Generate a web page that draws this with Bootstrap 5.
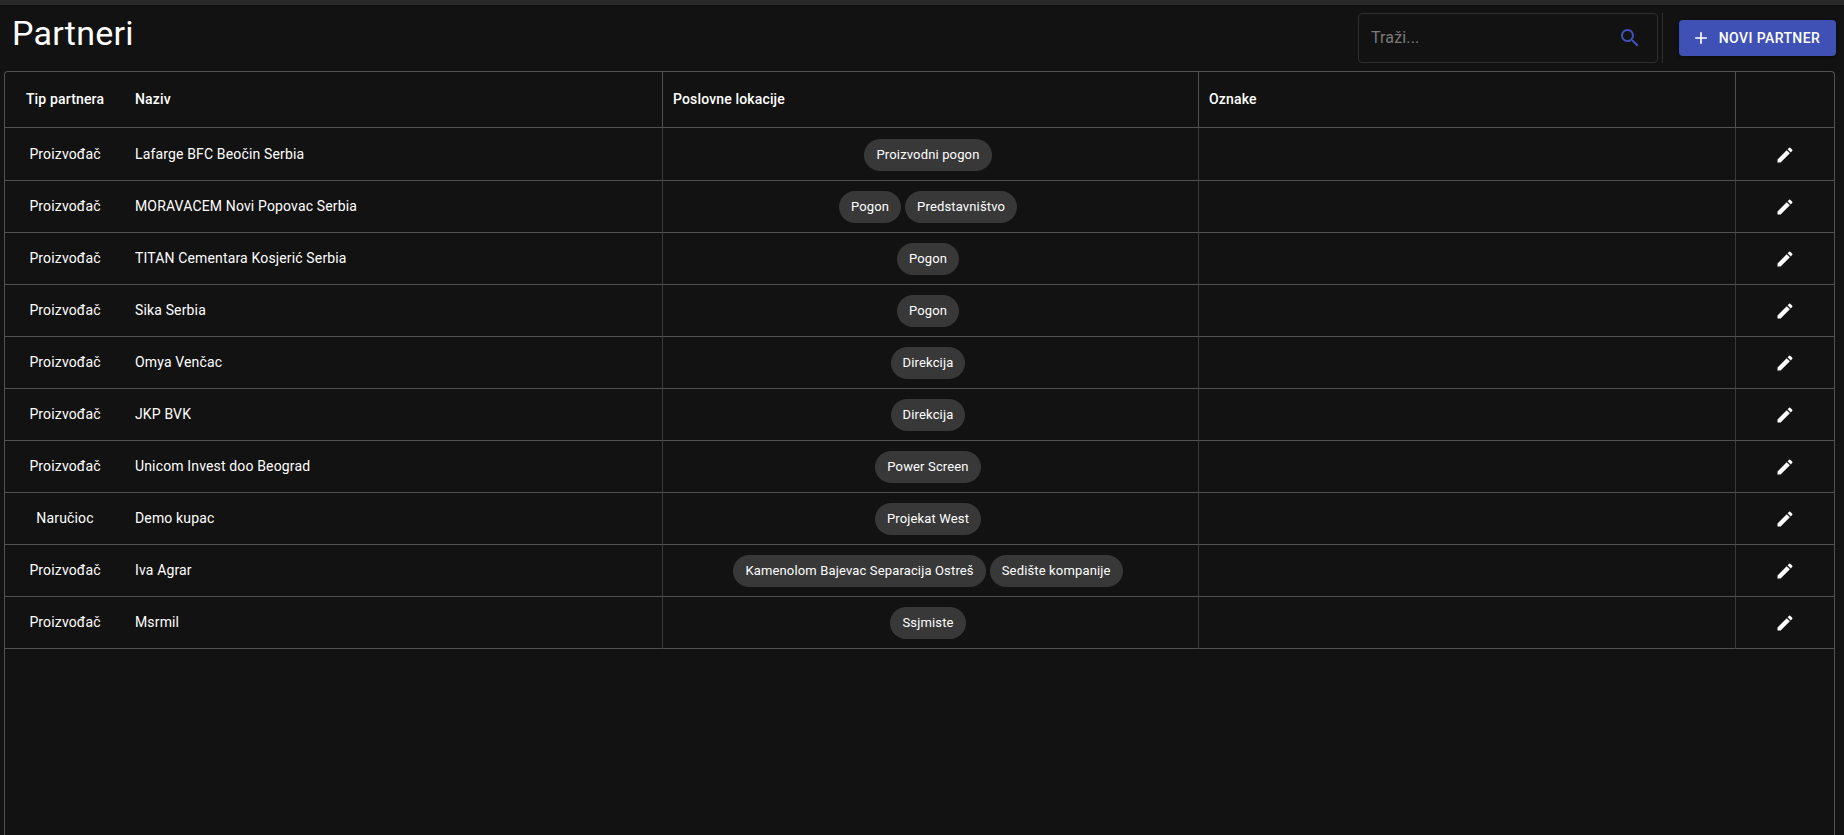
<!DOCTYPE html>
<html lang="sr">
<head>
<meta charset="utf-8">
<title>Partneri</title>
<link href="https://cdn.jsdelivr.net/npm/bootstrap@5.3.0/dist/css/bootstrap.min.css" rel="stylesheet">
<style>
html,body{height:100%;overflow:hidden}
body{background:#121212;color:#fff;font-family:Roboto,"Liberation Sans",sans-serif;font-size:14px}
.top-strip{height:5px;background:#292929}
.page-head{height:66px;padding:8px 8px 0 12px}
.page-title{font-size:34px;font-weight:400;line-height:1.2;letter-spacing:.25px;margin:0}
.search-box{width:300px;height:50px;border:1px solid #2e2e2e;border-radius:4px;padding:0 15px 0 10px}
.search-input{background:transparent;border:0;outline:0;color:#fff;font-size:16px;letter-spacing:.15px;flex:1;min-width:0;font-family:inherit}
.search-input::placeholder{color:#7a7a7a;opacity:1}
.v-sep{width:1px;height:50px;background:#2e2e2e;margin:0 16px 0 4px}
.new-btn{background:#3f51b5;color:#fff;border:0;border-radius:4px;height:36px;width:157px;font-size:14px;font-weight:500;letter-spacing:.4px;text-transform:uppercase;box-shadow:0 1px 3px rgba(0,0,0,.5);margin-top:7px}
.new-btn.p-0{padding-right:4px!important}
.new-btn:hover{background:#3f51b5;color:#fff}
.grid-box{position:relative;margin:0 9px 0 4px;height:770px;border:1px solid #515151;border-bottom:0;border-radius:4px 4px 0 0;overflow:hidden}
.grid-table{table-layout:fixed;width:100%;margin:0;border-collapse:separate;border-spacing:0;--bs-table-bg:transparent;--bs-table-color:#fff;color:#fff}
.grid-table th,.grid-table td{border:0;border-bottom:1px solid #515151;padding:0 10px;vertical-align:middle;font-size:14px;letter-spacing:.15px;background:transparent;color:#fff}
.grid-table th{height:56px;font-weight:500}
.grid-table td{height:52px}
.grid-table tbody tr:first-child td{height:53px;padding-top:1px}
.grid-table .c-line{border-right:1px solid #3a3a3a}
.grid-table th.c-line{border-right-color:#515151}
.grid-table td.chip-cell{padding-right:15px}
.chip-pill{display:inline-flex;align-items:center;height:32px;padding:0 12px;margin:0 2px;background:#383838;border-radius:16px;font-size:13px;color:#fff;white-space:nowrap}
.pen{width:20px;height:20px;fill:#fff;display:block;margin:1px auto 0}
</style>
</head>
<body>
<div class="top-strip"></div>
<div class="page-head d-flex align-items-start">
  <h1 class="page-title">Partneri</h1>
  <div class="ms-auto d-flex align-items-start">
    <div class="search-box d-flex align-items-center">
      <input class="search-input" type="text" placeholder="Traži...">
      <svg width="24" height="24" viewBox="0 0 24 24" fill="#3f51b5"><path d="M15.5 14h-.79l-.28-.27C15.41 12.59 16 11.11 16 9.5 16 5.91 13.09 3 9.5 3S3 5.91 3 9.5 5.91 16 9.5 16c1.61 0 3.09-.59 4.23-1.57l.27.28v.79l5 4.99L20.49 19l-4.99-5zm-6 0C7.01 14 5 11.99 5 9.5S7.01 5 9.5 5 14 7.01 14 9.5 11.99 14 9.5 14z"/></svg>
    </div>
    <div class="v-sep"></div>
    <button class="btn new-btn d-flex align-items-center justify-content-center gap-2 p-0" type="button">
      <svg width="20" height="20" viewBox="0 0 24 24" fill="#fff"><path d="M19 13h-6v6h-2v-6H5v-2h6V5h2v6h6v2z"/></svg>
      Novi partner
    </button>
  </div>
</div>
<div class="grid-box">
  <table class="table grid-table">
    <colgroup><col style="width:120px"><col style="width:538px"><col style="width:536px"><col style="width:537px"><col></colgroup>
    <thead>
      <tr><th class="text-center">Tip partnera</th><th class="c-line">Naziv</th><th class="c-line">Poslovne lokacije</th><th class="c-line">Oznake</th><th></th></tr>
    </thead>
    <tbody>
      <tr><td class="text-center">Proizvođač</td><td class="c-line">Lafarge BFC Beočin Serbia</td><td class="c-line chip-cell text-center"><span class="chip-pill">Proizvodni pogon</span></td><td class="c-line"></td><td><svg class="pen" viewBox="0 0 24 24"><path d="M3 17.25V21h3.75L17.81 9.94l-3.75-3.75L3 17.25zM20.71 7.04c.39-.39.39-1.02 0-1.41l-2.34-2.34a.9959.9959 0 0 0-1.41 0l-1.83 1.83 3.75 3.75 1.83-1.83z"/></svg></td></tr>
      <tr><td class="text-center">Proizvođač</td><td class="c-line">MORAVACEM Novi Popovac Serbia</td><td class="c-line chip-cell text-center"><span class="chip-pill">Pogon</span><span class="chip-pill">Predstavništvo</span></td><td class="c-line"></td><td><svg class="pen" viewBox="0 0 24 24"><path d="M3 17.25V21h3.75L17.81 9.94l-3.75-3.75L3 17.25zM20.71 7.04c.39-.39.39-1.02 0-1.41l-2.34-2.34a.9959.9959 0 0 0-1.41 0l-1.83 1.83 3.75 3.75 1.83-1.83z"/></svg></td></tr>
      <tr><td class="text-center">Proizvođač</td><td class="c-line">TITAN Cementara Kosjerić Serbia</td><td class="c-line chip-cell text-center"><span class="chip-pill">Pogon</span></td><td class="c-line"></td><td><svg class="pen" viewBox="0 0 24 24"><path d="M3 17.25V21h3.75L17.81 9.94l-3.75-3.75L3 17.25zM20.71 7.04c.39-.39.39-1.02 0-1.41l-2.34-2.34a.9959.9959 0 0 0-1.41 0l-1.83 1.83 3.75 3.75 1.83-1.83z"/></svg></td></tr>
      <tr><td class="text-center">Proizvođač</td><td class="c-line">Sika Serbia</td><td class="c-line chip-cell text-center"><span class="chip-pill">Pogon</span></td><td class="c-line"></td><td><svg class="pen" viewBox="0 0 24 24"><path d="M3 17.25V21h3.75L17.81 9.94l-3.75-3.75L3 17.25zM20.71 7.04c.39-.39.39-1.02 0-1.41l-2.34-2.34a.9959.9959 0 0 0-1.41 0l-1.83 1.83 3.75 3.75 1.83-1.83z"/></svg></td></tr>
      <tr><td class="text-center">Proizvođač</td><td class="c-line">Omya Venčac</td><td class="c-line chip-cell text-center"><span class="chip-pill">Direkcija</span></td><td class="c-line"></td><td><svg class="pen" viewBox="0 0 24 24"><path d="M3 17.25V21h3.75L17.81 9.94l-3.75-3.75L3 17.25zM20.71 7.04c.39-.39.39-1.02 0-1.41l-2.34-2.34a.9959.9959 0 0 0-1.41 0l-1.83 1.83 3.75 3.75 1.83-1.83z"/></svg></td></tr>
      <tr><td class="text-center">Proizvođač</td><td class="c-line">JKP BVK</td><td class="c-line chip-cell text-center"><span class="chip-pill">Direkcija</span></td><td class="c-line"></td><td><svg class="pen" viewBox="0 0 24 24"><path d="M3 17.25V21h3.75L17.81 9.94l-3.75-3.75L3 17.25zM20.71 7.04c.39-.39.39-1.02 0-1.41l-2.34-2.34a.9959.9959 0 0 0-1.41 0l-1.83 1.83 3.75 3.75 1.83-1.83z"/></svg></td></tr>
      <tr><td class="text-center">Proizvođač</td><td class="c-line">Unicom Invest doo Beograd</td><td class="c-line chip-cell text-center"><span class="chip-pill">Power Screen</span></td><td class="c-line"></td><td><svg class="pen" viewBox="0 0 24 24"><path d="M3 17.25V21h3.75L17.81 9.94l-3.75-3.75L3 17.25zM20.71 7.04c.39-.39.39-1.02 0-1.41l-2.34-2.34a.9959.9959 0 0 0-1.41 0l-1.83 1.83 3.75 3.75 1.83-1.83z"/></svg></td></tr>
      <tr><td class="text-center">Naručioc</td><td class="c-line">Demo kupac</td><td class="c-line chip-cell text-center"><span class="chip-pill">Projekat West</span></td><td class="c-line"></td><td><svg class="pen" viewBox="0 0 24 24"><path d="M3 17.25V21h3.75L17.81 9.94l-3.75-3.75L3 17.25zM20.71 7.04c.39-.39.39-1.02 0-1.41l-2.34-2.34a.9959.9959 0 0 0-1.41 0l-1.83 1.83 3.75 3.75 1.83-1.83z"/></svg></td></tr>
      <tr><td class="text-center">Proizvođač</td><td class="c-line">Iva Agrar</td><td class="c-line chip-cell text-center"><span class="chip-pill">Kamenolom Bajevac Separacija Ostreš</span><span class="chip-pill">Sedište kompanije</span></td><td class="c-line"></td><td><svg class="pen" viewBox="0 0 24 24"><path d="M3 17.25V21h3.75L17.81 9.94l-3.75-3.75L3 17.25zM20.71 7.04c.39-.39.39-1.02 0-1.41l-2.34-2.34a.9959.9959 0 0 0-1.41 0l-1.83 1.83 3.75 3.75 1.83-1.83z"/></svg></td></tr>
      <tr><td class="text-center">Proizvođač</td><td class="c-line">Msrmil</td><td class="c-line chip-cell text-center"><span class="chip-pill">Ssjmiste</span></td><td class="c-line"></td><td><svg class="pen" viewBox="0 0 24 24"><path d="M3 17.25V21h3.75L17.81 9.94l-3.75-3.75L3 17.25zM20.71 7.04c.39-.39.39-1.02 0-1.41l-2.34-2.34a.9959.9959 0 0 0-1.41 0l-1.83 1.83 3.75 3.75 1.83-1.83z"/></svg></td></tr>
    </tbody>
  </table>
</div>
<script src="https://cdn.jsdelivr.net/npm/bootstrap@5.3.0/dist/js/bootstrap.bundle.min.js"></script>
</body>
</html>
